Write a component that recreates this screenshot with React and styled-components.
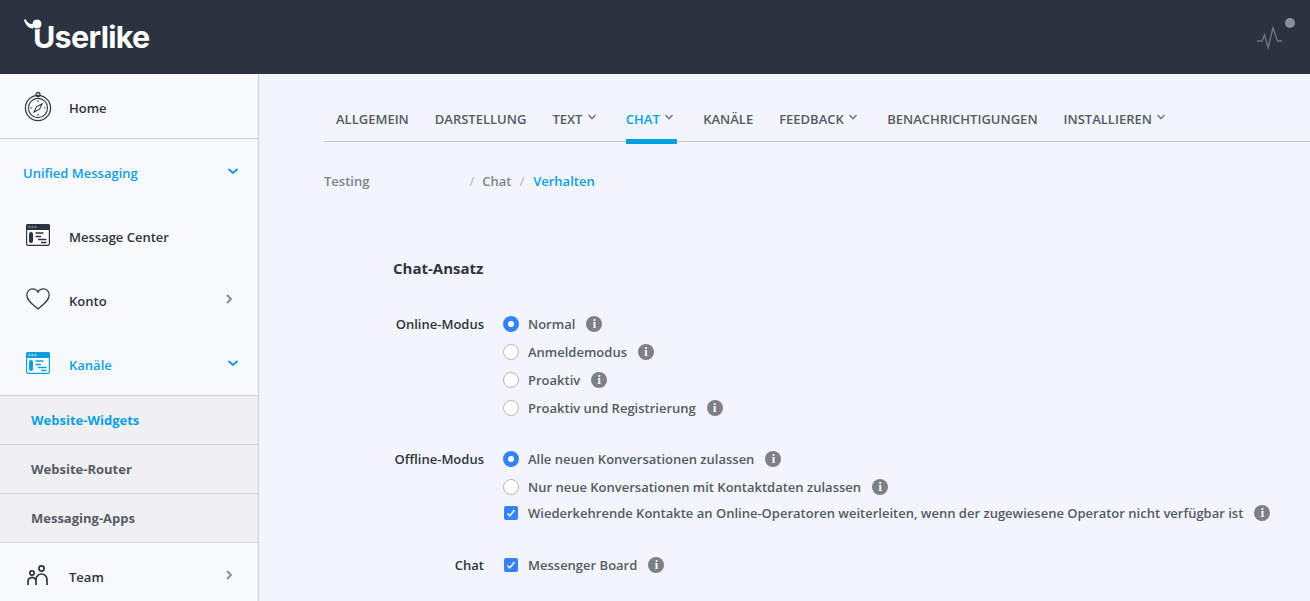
import React from "react";
import styled, { createGlobalStyle } from "styled-components";

const GlobalStyle = createGlobalStyle`
  html, body {
    margin: 0;
    padding: 0;
    height: 100%;
    overflow: hidden;
    background: #f2f5fc;
    font-family: "Open Sans", "Liberation Sans", sans-serif;
  }
`;

const BLUE = "#0c9fe0";

const Page = styled.div`
  width: 1310px;
  height: 601px;
  overflow: hidden;
  display: flex;
  flex-direction: column;
`;

const Header = styled.header`
  height: 74px;
  flex: none;
  background: #2b3340;
  display: flex;
  align-items: flex-start;
  justify-content: space-between;
`;

const Logo = styled.div`
  display: flex;
  align-items: flex-start;
  padding: 15px 0 0 23px;
`;

const LogoMark = styled.svg`
  position: relative;
  z-index: 1;
`;

const LogoText = styled.span`
  font-family: Inter, "Liberation Sans", sans-serif;
  font-weight: 700;
  font-size: 30.5px;
  line-height: 40px;
  letter-spacing: -0.7px;
  color: #fff;
  margin: 2px 0 0 -10px;
`;

const Pulse = styled.svg`
  margin: 10px 10px 0 0;
`;

const Body = styled.div`
  flex: 1;
  display: flex;
  min-height: 0;
`;

const Sidebar = styled.nav`
  width: 258px;
  flex: none;
  background: #f8f9fb;
  border-right: 1px solid #cfd1d5;
`;

const NavRow = styled.div`
  height: ${(p) => p.$h || 64}px;
  box-sizing: border-box;
  display: flex;
  align-items: center;
  padding: 0 23px;
  font-size: 13px;
  font-weight: 600;
  color: ${(p) => (p.$active ? BLUE : "#2e3440")};
  border-bottom: ${(p) => (p.$line ? "1px solid #c9cbcf" : "none")};
`;

const NavIcon = styled.span`
  width: 46px;
  flex: none;
  display: flex;
  align-items: center;
  padding-left: ${(p) => p.$pl || 0}px;
  box-sizing: border-box;
`;

const NavLabel = styled.span`
  flex: 1;
  padding-top: 4px;
`;

const OpenChevron = styled.span`
  display: flex;
  margin-right: -4px;
`;

const SubNav = styled.div`
  background: #f0f0f3;
  border-top: 1px solid #d5d6da;
`;

const SubRow = styled.div`
  height: 49px;
  box-sizing: border-box;
  display: flex;
  align-items: center;
  padding-left: 31px;
  font-size: 13px;
  font-weight: 700;
  color: ${(p) => (p.$active ? BLUE : "#565b66")};
  border-bottom: 1px solid #d3d5dc;
`;

const Main = styled.main`
  flex: 1;
  min-width: 0;
  background: #f2f5fc;
  padding: 27px 0 0 65px;
`;

const Tabs = styled.div`
  height: 40px;
  display: flex;
  align-items: flex-start;
  gap: 26px;
  padding-left: 12px;
  border-bottom: 1px solid #c8c9cc;
`;

const Tab = styled.div`
  height: 43px;
  box-sizing: border-box;
  padding: 0 ${(p) => (p.$caret ? 3 : 0)}px 2px 0;
  display: flex;
  align-items: center;
  gap: 4.4px;
  font-size: 13px;
  font-weight: 600;
  white-space: nowrap;
  color: ${(p) => (p.$active ? BLUE : "#555a65")};
  border-bottom: ${(p) => (p.$active ? `5px solid #009fe3` : "5px solid transparent")};
`;

const Crumbs = styled.div`
  display: flex;
  align-items: center;
  height: 20px;
  margin-top: 29px;
  font-size: 13px;
  font-weight: 600;
  color: #7e838c;
`;

const CrumbGap = styled.span`
  width: ${(p) => p.$w}px;
  flex: none;
`;

const Slash = styled.span`
  font-weight: 400;
  color: #b0b3b9;
  margin: 0 ${(p) => p.$right}px 0 ${(p) => p.$left}px;
`;

const CrumbActive = styled.span`
  color: ${BLUE};
`;

const Form = styled.form`
  padding-left: 69px;
  margin-top: 67px;
`;

const SectionTitle = styled.h2`
  margin: 0 0 32px;
  font-size: 15px;
  line-height: 20px;
  font-weight: 700;
  color: #2e3440;
`;

const FieldRow = styled.div`
  display: grid;
  grid-template-columns: 91px 1fr;
  column-gap: 19px;
  margin-bottom: ${(p) => p.$mb || 0}px;
`;

const FieldLabel = styled.div`
  text-align: right;
  font-size: 13px;
  font-weight: 600;
  line-height: 28px;
  color: #2e3440;
`;

const Options = styled.div`
  display: flex;
  flex-direction: column;
`;

const Option = styled.label`
  height: ${(p) => p.$h || 28}px;
  display: flex;
  align-items: center;
  font-size: 13px;
  font-weight: 600;
  color: #555a65;
  white-space: nowrap;
`;

const Radio = styled.span`
  width: 16px;
  height: 16px;
  flex: none;
  box-sizing: border-box;
  border-radius: 50%;
  margin-right: 9px;
  background: ${(p) => (p.$on ? "#3483f6" : "#fff")};
  border: ${(p) => (p.$on ? "5px solid #3483f6" : "1px solid #b5b7bb")};

  &::after {
    content: "";
    display: ${(p) => (p.$on ? "block" : "none")};
    width: 6px;
    height: 6px;
    border-radius: 50%;
    background: #fff;
  }
`;

const Check = styled.span`
  width: 14px;
  height: 14px;
  flex: none;
  border-radius: 2px;
  margin: 0 10px 0 1px;
  background: #3483f6;
  display: flex;
  align-items: center;
  justify-content: center;
`;

const Info = styled.span`
  width: 16px;
  height: 16px;
  flex: none;
  margin-left: 11px;
  border-radius: 50%;
  background: #7d8087;
  color: #fff;
  font-family: "Liberation Serif", serif;
  font-size: 12px;
  font-weight: 700;
  line-height: 16px;
  text-align: center;
`;

const ChevronDown = () => (
  <OpenChevron>
    <svg width="12" height="12" viewBox="0 0 12 12" fill="none">
      <path d="M1.500 4l4.500 4 4.500-4" stroke={BLUE} strokeWidth="2" />
    </svg>
  </OpenChevron>
);

const ChevronRight = () => (
  <svg width="12" height="12" viewBox="0 0 12 12" fill="none">
    <path d="M4 2l4 4-4 4" stroke="#8a8e96" strokeWidth="2" />
  </svg>
);

const TabCaret = () => (
  <svg width="10" height="8" viewBox="0 0 10 8" fill="none" style={{ marginTop: -4 }}>
    <path d="M1.500 2l3.500 3.500L8.500 2" stroke="#7b7f88" strokeWidth="1.700" />
  </svg>
);

const Compass = () => (
  <svg width="28" height="31" viewBox="0 0 28 31" fill="none" stroke="#343a46">
    <circle cx="14" cy="3.500" r="2" strokeWidth="1.300" />
    <circle cx="14" cy="17" r="12.600" strokeWidth="1.300" />
    <circle cx="14" cy="17" r="9.600" strokeWidth="1.100" />
    <path d="M18 13l-2.600 5.400L10 21l2.600-5.400z" strokeWidth="1.100" />
    <path d="M14 9.500v1.600M14 23v1.600M6.500 17h1.600M20 17h1.600" strokeWidth="1.200" />
  </svg>
);

const WindowIcon = ({ color, top }) => (
  <svg width="24" height="22" viewBox="0 0 24 22" fill="none">
    <rect x="0.600" y="0.600" width="22.800" height="20.800" rx="1.600" fill="#fff" stroke={color} strokeWidth="1.200" />
    <path d="M0 2a2 2 0 0 1 2-2h20a2 2 0 0 1 2 2v4H0z" fill={color} />
    <path d="M2.500 3h1.800M5.500 3h1.800M8.500 3h1.800" stroke={top} strokeWidth="1.600" />
    <rect x="3" y="8" width="4" height="11" rx="2" fill={color} />
    <path d="M9.500 9h8M9.500 12.500h5.500M12 15.500h8.500M15 18.500h5.500" stroke={color} strokeWidth="1.300" />
  </svg>
);

const Heart = () => (
  <svg width="24" height="22" viewBox="0 0 24 22" fill="none">
    <path
      d="M12 21C7 16.800.8 12.600.8 6.900.8 3.400 3.400.9 6.500.9c2.300 0 4.400 1.200 5.500 3.300C13.100 2.100 15.200.9 17.500.9c3.100 0 5.700 2.500 5.700 6 0 5.700-6.200 9.900-11.200 14.100z"
      stroke="#343a46"
      strokeWidth="1.300"
    />
  </svg>
);

const People = () => (
  <svg width="21" height="21" viewBox="0 0 21 21" fill="none" stroke="#2e3440" strokeWidth="1.700">
    <circle cx="14.500" cy="3.500" r="2.600" />
    <circle cx="5" cy="8" r="2.200" />
    <path d="M1 20v-3.500a4 4 0 0 1 7.500-2M9 20v-5.500a5.500 5.500 0 0 1 11 0V20" />
  </svg>
);

const Tick = () => (
  <svg width="10" height="10" viewBox="0 0 10 10" fill="none">
    <path d="M1.500 5.500l2.300 2.500 4.700-6" stroke="#fff" strokeWidth="1.400" />
  </svg>
);

const tabs = [
  { label: "ALLGEMEIN" },
  { label: "DARSTELLUNG" },
  { label: "TEXT", caret: true },
  { label: "CHAT", caret: true, active: true },
  { label: "KANÄLE" },
  { label: "FEEDBACK", caret: true },
  { label: "BENACHRICHTIGUNGEN" },
  { label: "INSTALLIEREN", caret: true },
];

const App = () => {
  return (
    <>
      <GlobalStyle />
      <Page>
        <Header>
          <Logo>
            <LogoMark width="20" height="18" viewBox="0 0 20 18" fill="#fff">
              <circle cx="14" cy="9" r="5" stroke="#2b3340" strokeWidth="1" />
              <path d="M1 5l1.500-1C4 8 7 9.500 10 9l.5 4.500C6 14 2.500 10 1 5z" />
            </LogoMark>
            <LogoText>Userlike</LogoText>
          </Logo>
          <Pulse width="50" height="44" viewBox="0 0 50 44" fill="none">
            <circle cx="40" cy="13" r="5" fill="#8b9097" />
            <path d="M7 31h5l2.500-6 3.700 12.500L23 18l4.500 13H32" stroke="#6f7580" strokeWidth="1.400" />
          </Pulse>
        </Header>
        <Body>
          <Sidebar>
            <NavRow $h={65} $line>
              <NavIcon $pl={1}><Compass /></NavIcon>
              <NavLabel>Home</NavLabel>
            </NavRow>
            <NavRow $active>
              <NavLabel>Unified Messaging</NavLabel>
              <ChevronDown />
            </NavRow>
            <NavRow>
              <NavIcon $pl={3}><WindowIcon color="#2b3340" top="#9aa0a9" /></NavIcon>
              <NavLabel>Message Center</NavLabel>
            </NavRow>
            <NavRow>
              <NavIcon $pl={3}><Heart /></NavIcon>
              <NavLabel>Konto</NavLabel>
              <ChevronRight />
            </NavRow>
            <NavRow $active>
              <NavIcon $pl={3}><WindowIcon color={BLUE} top="#c5e6f7" /></NavIcon>
              <NavLabel>Kanäle</NavLabel>
              <ChevronDown />
            </NavRow>
            <SubNav>
              <SubRow $active>Website-Widgets</SubRow>
              <SubRow>Website-Router</SubRow>
              <SubRow>Messaging-Apps</SubRow>
            </SubNav>
            <NavRow>
              <NavIcon $pl={4}><People /></NavIcon>
              <NavLabel>Team</NavLabel>
              <ChevronRight />
            </NavRow>
          </Sidebar>
          <Main>
            <Tabs>
              {tabs.map((t) => (
                <Tab key={t.label} $caret={t.caret} $active={t.active}>
                  {t.label}
                  {t.caret && <TabCaret />}
                </Tab>
              ))}
            </Tabs>
            <Crumbs>
              Testing
              <CrumbGap $w={100} />
              <Slash $left={0} $right={8}>/</Slash>
              Chat
              <Slash $left={8} $right={9}>/</Slash>
              <CrumbActive>Verhalten</CrumbActive>
            </Crumbs>
            <Form>
              <SectionTitle>Chat-Ansatz</SectionTitle>
              <FieldRow $mb={23}>
                <FieldLabel>Online-Modus</FieldLabel>
                <Options>
                  <Option><Radio $on />Normal<Info>i</Info></Option>
                  <Option><Radio />Anmeldemodus<Info>i</Info></Option>
                  <Option><Radio />Proaktiv<Info>i</Info></Option>
                  <Option><Radio />Proaktiv und Registrierung<Info>i</Info></Option>
                </Options>
              </FieldRow>
              <FieldRow $mb={26}>
                <FieldLabel>Offline-Modus</FieldLabel>
                <Options>
                  <Option><Radio $on />Alle neuen Konversationen zulassen<Info>i</Info></Option>
                  <Option><Radio />Nur neue Konversationen mit Kontaktdaten zulassen<Info>i</Info></Option>
                  <Option $h={24}>
                    <Check><Tick /></Check>
                    Wiederkehrende Kontakte an Online-Operatoren weiterleiten, wenn der zugewiesene Operator nicht verfügbar ist
                    <Info>i</Info>
                  </Option>
                </Options>
              </FieldRow>
              <FieldRow>
                <FieldLabel>Chat</FieldLabel>
                <Options>
                  <Option>
                    <Check><Tick /></Check>
                    Messenger Board
                    <Info>i</Info>
                  </Option>
                </Options>
              </FieldRow>
            </Form>
          </Main>
        </Body>
      </Page>
    </>
  );
};

export default App;
